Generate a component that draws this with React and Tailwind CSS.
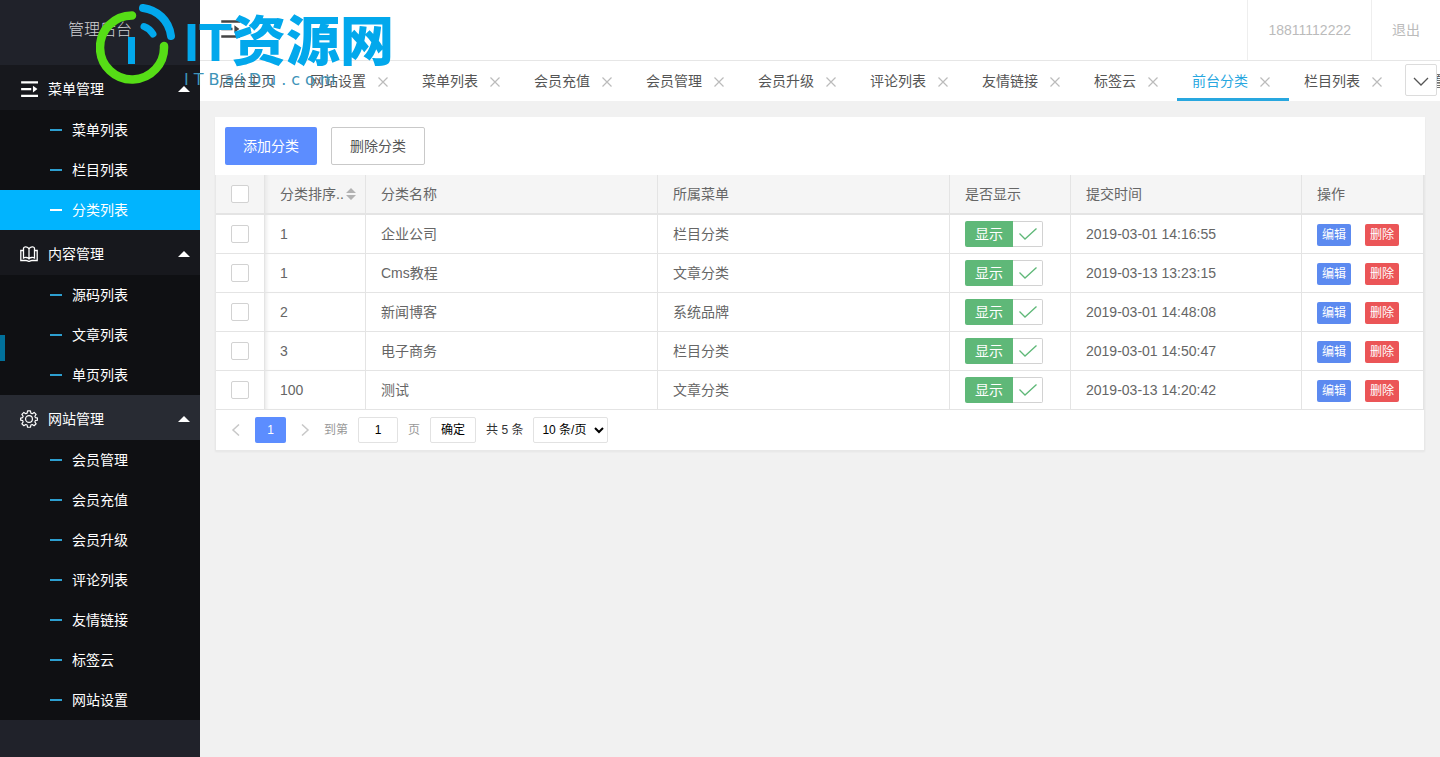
import React, { useState } from 'react';

const menus = [
  { title: '菜单管理', icon: 'shrink', items: ['菜单列表', '栏目列表', '分类列表'] },
  { title: '内容管理', icon: 'book', items: ['源码列表', '文章列表', '单页列表'] },
  {
    title: '网站管理',
    icon: 'gear',
    items: ['会员管理', '会员充值', '会员升级', '评论列表', '友情链接', '标签云', '网站设置'],
  },
];

const tabs = [
  '网站设置', '菜单列表', '会员充值', '会员管理', '会员升级', '评论列表',
  '友情链接', '标签云', '前台分类', '栏目列表', '配置管理',
];

const initialRows = [
  { id: 1, sort: 1, name: '企业公司', menu: '栏目分类', time: '2019-03-01 14:16:55', show: true },
  { id: 2, sort: 1, name: 'Cms教程', menu: '文章分类', time: '2019-03-13 13:23:15', show: true },
  { id: 3, sort: 2, name: '新闻博客', menu: '系统品牌', time: '2019-03-01 14:48:08', show: true },
  { id: 4, sort: 3, name: '电子商务', menu: '栏目分类', time: '2019-03-01 14:50:47', show: true },
  { id: 5, sort: 100, name: '测试', menu: '文章分类', time: '2019-03-13 14:20:42', show: true },
];

const ShrinkIcon = ({ className }) => (
  <svg className={className} viewBox="0 0 16 16" fill="currentColor">
    <path d="M1 1h15v2H1zM1 7h9v2H1zM1 13h15v2H1zM11.500 5l4 3-4 3z" />
  </svg>
);

const BookIcon = ({ className }) => (
  <svg className={className} viewBox="0 0 18 16" fill="none" stroke="currentColor" strokeWidth="1.3">
    <path d="M9 3C8 .6 3.500 .2 3.500 2.400V12c1.500-1 4.500-.6 5.500 .8 1-1.400 4-1.800 5.500-.8V2.400C14.500 .2 10 .6 9 3zM9 3v9.800" />
    <path d="M3.500 4.500H.8v10h5.400c1.200 0 1.500 .9 2.800 .9s1.600-.9 2.800-.9h5.400v-10h-2.700" />
  </svg>
);

const GearIcon = ({ className }) => (
  <svg className={className} viewBox="0 0 20 20" fill="none" stroke="currentColor" strokeWidth="1.3" strokeLinejoin="round">
    <path d="M8.400 1h3.200l.5 2.500 1.500 .6 2.100-1.400 2.200 2.200-1.400 2.100 .6 1.500 2.500 .5v2.200l-2.500 .5-.6 1.500 1.400 2.100-2.200 2.200-2.100-1.400-1.500 .6-.5 2.500H8.400l-.5-2.500-1.500-.6-2.100 1.400-2.200-2.200 1.400-2.100-.6-1.500L.7 11.200V9l2.200-.5 .6-1.500-1.400-2.100 2.200-2.200 2.100 1.400 1.500-.6z" />
    <circle cx="10" cy="10" r="3.800" />
  </svg>
);

const CloseIcon = () => (
  <svg className="w-2.5 h-2.5" viewBox="0 0 10 10" fill="none" stroke="currentColor" strokeWidth="1.200">
    <path d="M.5 .5l9 9M9.500 .5l-9 9" />
  </svg>
);

const menuIcon = (name) => {
  if (name === 'shrink') return <ShrinkIcon className="w-[18px] h-[18px]" />;
  if (name === 'book') return <BookIcon className="w-[18px] h-4" />;
  return <GearIcon className="w-[18px] h-[18px]" />;
};

const Watermark = () => (
  <div className="pointer-events-none absolute left-24 top-0 z-20 flex">
    <svg className="w-20 h-[88px]" viewBox="0 0 80 88" fill="none">
      <path d="M36 15.500A32 32 0 1 0 68 46" stroke="#56dd16" strokeWidth="8.500" strokeLinecap="round" />
      <path d="M47 8C61 10 73 20 75 36" stroke="#02a8ec" strokeWidth="8" strokeLinecap="round" />
      <path d="M48 26.500C52 28 55 30.500 57 34" stroke="#02a8ec" strokeWidth="7" strokeLinecap="round" />
      <path d="M35.500 37v27" stroke="#02a8ec" strokeWidth="7" />
    </svg>
    <div className="ml-2 pt-3 whitespace-nowrap">
      <div className="text-[54px] leading-[60px] font-black text-[#02a8ec]">IT资源网</div>
      <div className="text-base leading-4 tracking-[5px] text-[#3d93b8] font-['DejaVu_Sans',sans-serif]">ITBaiDu.com</div>
    </div>
  </div>
);

const Sidebar = ({ active, onSelect }) => (
  <aside className="relative w-[200px] shrink-0 bg-[#20222a] text-white">
    <div className="h-[65px] pb-1.5 flex items-center justify-center text-base font-light text-[#d0d1d3]">管理后台</div>
    <nav>
      {menus.map((menu) => (
        <div key={menu.title}>
          <button
            className={`w-full h-[45px] pt-0.5 pl-5 pr-[10px] flex items-center text-sm ${
              menu.icon === 'gear' ? 'bg-[#282b33]' : 'bg-[#17181d]'
            }`}
          >
            <span className="w-7 flex">{menuIcon(menu.icon)}</span>
            {menu.title}
            <svg className="ml-auto w-3 h-1.5" viewBox="0 0 12 6" fill="currentColor">
              <path d="M0 6l6-6 6 6z" />
            </svg>
          </button>
          <ul className="bg-[#0f1013]">
            {menu.items.map((item) => (
              <li key={item}>
                <a
                  href="#"
                  onClick={() => onSelect(item)}
                  className={`h-10 pl-[50px] flex items-center gap-2.5 text-sm ${active === item ? 'bg-[#01b4fe]' : ''}`}
                >
                  <span className={`w-3 h-0.5 ${active === item ? 'bg-white' : 'bg-[#2d9fd0]'}`} />
                  {item}
                </a>
              </li>
            ))}
          </ul>
        </div>
      ))}
    </nav>
    <div className="absolute left-0 top-[335px] w-[5px] h-[26px] bg-[#01709a]" />
  </aside>
);

const TabBar = ({ active, onSelect }) => (
  <div className="relative h-10 bg-white">
    <div className="h-full pl-1 flex overflow-hidden whitespace-nowrap text-sm text-[#555]">
      <button className="shrink-0 pl-[15px] pr-5">后台主页</button>
      {tabs.map((tab) => (
        <div
          key={tab}
          className={`shrink-0 px-[15px] flex items-center gap-3 border-b-3 ${
            active === tab ? 'border-[#28a7df] text-[#28a7df]' : 'border-transparent'
          }`}
        >
          <button onClick={() => onSelect(tab)} className="pt-[3px]">{tab}</button>
          <button aria-label={`关闭${tab}`} className="mr-1 pt-1 text-[#bbb]">
            <CloseIcon />
          </button>
        </div>
      ))}
    </div>
    <button
      aria-label="更多标签"
      className="absolute right-[3px] top-[3px] w-8 h-8 pt-0.5 flex items-center justify-center bg-white border border-[#dcdcdc] rounded-xs"
    >
      <svg className="w-4 h-4" viewBox="0 0 16 16" fill="none" stroke="#555" strokeWidth="1.300">
        <path d="M1 5l7 7 7-7" />
      </svg>
    </button>
  </div>
);

const checkboxClass = 'block w-[18px] h-[18px] appearance-none rounded-xs border border-[#d2d2d2] bg-white checked:bg-[#5c8dff]';

const CategoryTable = ({ rows, onToggle }) => (
  <table className="w-full table-fixed border-separate border-spacing-0 text-sm text-[#666]">
    <colgroup>
      <col className="w-[49px]" />
      <col className="w-[101px]" />
      <col />
      <col />
      <col className="w-[121px]" />
      <col className="w-[231px]" />
      <col className="w-[122px]" />
    </colgroup>
    <thead>
      <tr className="h-10 bg-[#f5f5f5] text-left whitespace-nowrap *:border-b-2 *:border-r *:border-[#e4e4e4] *:px-[15px] *:font-normal">
        <th><input type="checkbox" aria-label="全选" className={checkboxClass} /></th>
        <th className="shadow-[inset_4px_0_4px_-3px_#e4e4e4]">
          <div className="-mr-2.5 flex items-center gap-0.5">
            <span>分类排序..</span>
            <svg className="w-2.5 h-3 shrink-0" viewBox="0 0 10 12" fill="#b2b2b2">
              <path d="M0 5l5-5 5 5zM0 7l5 5 5-5z" />
            </svg>
          </div>
        </th>
        <th>分类名称</th>
        <th>所属菜单</th>
        <th>是否显示</th>
        <th>提交时间</th>
        <th>操作</th>
      </tr>
    </thead>
    <tbody>
      {rows.map((row) => (
        <tr key={row.id} className="h-[39px] *:border-b *:border-r *:border-[#e4e4e4] *:px-[15px]">
          <td><input type="checkbox" aria-label={`选择${row.name}`} className={checkboxClass} /></td>
          <td className="shadow-[inset_4px_0_4px_-3px_#e4e4e4]">{row.sort}</td>
          <td>{row.name}</td>
          <td>{row.menu}</td>
          <td>
            <label className="relative flex w-[78px] h-[26px] cursor-pointer">
              <input type="checkbox" checked={row.show} onChange={() => onToggle(row.id)} className="sr-only" />
              <span className="w-12 flex items-center justify-center rounded-l-xs bg-[#5fb878] text-white">显示</span>
              <span className="flex-1 flex items-center justify-center rounded-r-xs border border-l-0 border-[#d2d2d2]">
                {row.show && (
                  <svg className="w-[18px] h-3" viewBox="0 0 18 12" fill="none" stroke="#5fb878" strokeWidth="1.300">
                    <path d="M.5 5.500L6 11 17.500 .5" />
                  </svg>
                )}
              </span>
            </label>
          </td>
          <td>{row.time}</td>
          <td>
            <div className="flex gap-3.5 pt-0.5 text-xs text-white">
              <button className="w-[34px] h-[22px] rounded-xs bg-[#5c8af0]">编辑</button>
              <button className="w-[34px] h-[22px] rounded-xs bg-[#eb5557]">删除</button>
            </div>
          </td>
        </tr>
      ))}
    </tbody>
  </table>
);

const Pagination = ({ total }) => (
  <div className="h-10 pl-[15px] flex items-center text-xs text-[#999]">
    <button aria-label="上一页" className="w-2.5 text-[#c8c8c8]">
      <svg className="w-2.5 h-3" viewBox="0 0 10 12" fill="none" stroke="currentColor" strokeWidth="1.500">
        <path d="M8 .5L2 6l6 5.500" />
      </svg>
    </button>
    <button className="ml-3.5 w-[31px] h-[26px] rounded-xs bg-[#5c8dff] text-white">1</button>
    <button aria-label="下一页" className="ml-3.5 w-2.5 text-[#c8c8c8]">
      <svg className="w-2.5 h-3" viewBox="0 0 10 12" fill="none" stroke="currentColor" strokeWidth="1.500">
        <path d="M2 .5L8 6l-6 5.500" />
      </svg>
    </button>
    <label className="ml-3.5 flex items-center gap-2.5">
      到第
      <input type="text" defaultValue="1" className="w-10 h-[26px] rounded-xs border border-[#e2e2e2] text-center text-black" />
      页
    </label>
    <button className="ml-2.5 w-[46px] h-[26px] rounded-xs border border-[#e2e2e2] text-black">确定</button>
    <span className="ml-2.5 text-[#333]">共 {total} 条</span>
    <select aria-label="每页条数" className="ml-2.5 w-[75px] h-[26px] pl-1 rounded-xs border border-[#e2e2e2] bg-white text-black">
      <option>10 条/页</option>
      <option>20 条/页</option>
      <option>50 条/页</option>
    </select>
  </div>
);

const App = () => {
  const [activeMenu, setActiveMenu] = useState('分类列表');
  const [activeTab, setActiveTab] = useState('前台分类');
  const [rows, setRows] = useState(initialRows);

  const toggleShow = (id) => {
    setRows(rows.map((row) => (row.id === id ? { ...row, show: !row.show } : row)));
  };

  return (
    <div className="relative min-h-screen flex bg-[#f1f1f1] font-['Liberation_Sans','Noto_Sans_CJK_SC',sans-serif]">
      <Watermark />
      <Sidebar active={activeMenu} onSelect={setActiveMenu} />
      <div className="flex-1 min-w-0">
        <header className="h-[61px] pl-5 flex items-center justify-between bg-white border-b border-[#e6e6e6] text-sm text-[#bbb]">
          <button aria-label="收起菜单" className="pb-0.5 text-[#444]">
            <ShrinkIcon className="w-5 h-5" />
          </button>
          <div className="h-full flex">
            <a href="#" className="px-5 flex items-center border-l border-[#eee]">18811112222</a>
            <a href="#" className="px-5 flex items-center border-l border-[#eee]">退出</a>
          </div>
        </header>
        <TabBar active={activeTab} onSelect={setActiveTab} />
        <main className="px-[15px] py-4">
          <div className="bg-white shadow-[0_1px_2px_rgba(0,0,0,0.05)]">
            <div className="p-2.5 flex gap-3.5 text-sm">
              <button className="h-[38px] px-[18px] rounded-xs bg-[#5c8dff] text-white">添加分类</button>
              <button className="h-[38px] px-[18px] rounded-xs border border-[#c9c9c9] text-[#555]">删除分类</button>
            </div>
            <div className="border-x border-b border-[#e8e8e8]">
              <CategoryTable rows={rows} onToggle={toggleShow} />
              <Pagination total={rows.length} />
            </div>
          </div>
        </main>
      </div>
    </div>
  );
};

export default App;
